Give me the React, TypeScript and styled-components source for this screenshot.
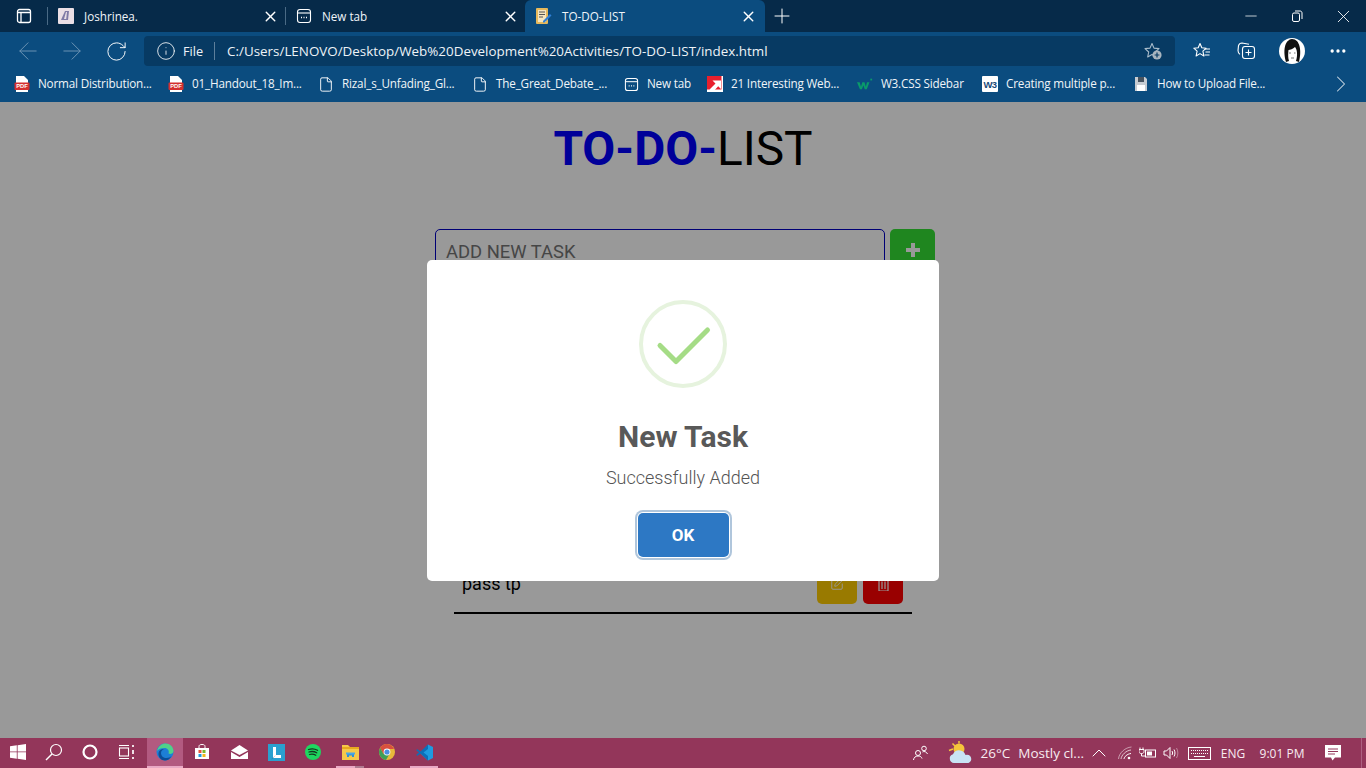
import React from "react";
import styled, { createGlobalStyle } from "styled-components";
import { ArrowLeft, ArrowRight, RotateCw, Info, Plus, X, Minus, ChevronRight, ChevronUp, MoreHorizontal, File as FileIcon, SquarePen } from "lucide-react";

const Global = createGlobalStyle`
  html, body { margin: 0; padding: 0; width: 1366px; height: 768px; overflow: hidden; background: #fff; }
  * { box-sizing: border-box; }
  body { font-family: "Open Sans", "Noto Sans", sans-serif; }
`;

const Screen = styled.div`display:flex;flex-direction:column;width:1366px;height:768px;`;

const TabStrip = styled.div`display:flex;align-items:center;height:32px;background:#062a49;color:#fff;`;
const SideButton = styled.div`width:47px;height:32px;display:flex;align-items:center;justify-content:center;`;
const Divider = styled.div`width:1px;height:18px;background:#4a6a85;flex:none;`;
const Tab = styled.div<{ $active?: boolean; $w: number }>`
  width:${p => p.$w}px;height:32px;display:flex;align-items:center;padding:0 ${p => p.$active ? 8 : 6}px 0 10px;flex:none;
  background:${p => p.$active ? "#0b4c7f" : "transparent"};
  border-radius:${p => p.$active ? "6px 6px 0 0" : "0"};
`;
const TabTitle = styled.span`flex:1;margin-left:10px;font-size:11.7px;color:#f0f5f9;white-space:nowrap;`;
const NewTab = styled.div`width:34px;height:32px;display:flex;align-items:center;justify-content:center;`;
const Spacer = styled.div`flex:1;`;
const WinBtn = styled.div`width:46px;height:32px;display:flex;align-items:center;justify-content:center;`;

const Toolbar = styled.div`display:flex;align-items:flex-start;height:37px;padding:4px 6px 0 6px;background:#0b4c7f;color:#fff;`;
const NavBtn = styled.div<{ $w?: number }>`width:${p => p.$w ?? 44}px;height:30px;display:flex;align-items:center;justify-content:center;flex:none;`;
const AddressBar = styled.div`width:1031px;height:30px;margin:0 5px 0 6px;padding:0 12px 0 12px;display:flex;align-items:center;background:#073a63;border-radius:4px;flex:none;`;
const AddrLabel = styled.span`margin-left:7px;font-size:12.7px;color:#eef3f7;`;
const AddrSep = styled.span`width:1px;height:18px;background:#5d7f9b;margin:0 12px 0 11px;`;
const AddrUrl = styled.span`flex:1;font-size:13.4px;color:#eef3f7;white-space:nowrap;`;

const BookmarkBar = styled.div`display:flex;align-items:center;height:33px;padding:0 0 3px 14px;background:#0b4c7f;`;
const Bookmark = styled.div<{ $w: number }>`width:${p => p.$w}px;flex:none;display:flex;align-items:center;`;
const BookmarkIcon = styled.div`width:16px;height:16px;margin-right:8px;flex:none;display:flex;align-items:center;justify-content:center;`;
const BookmarkText = styled.span`margin-top:-2px;font-size:11.7px;letter-spacing:-0.18px;color:#f0f5f9;white-space:nowrap;`;
const BookmarkMore = styled.div`margin-left:auto;width:50px;display:flex;justify-content:center;`;

const Main = styled.main`position:relative;flex:1;background:#fff;display:flex;flex-direction:column;align-items:center;overflow:hidden;font-family:Roboto,sans-serif;`;
const Title = styled.h1`margin:18px 0 0;height:58px;line-height:58px;font-size:47.8px;font-weight:400;color:#000;`;
const TitleAccent = styled.b`color:#00f;font-weight:700;`;
const Form = styled.div`display:flex;margin:51px 0 0 4px;width:500px;gap:5px;`;
const TaskInput = styled.div`width:450px;height:44px;border:1.5px solid #0000c4;border-radius:5px;padding:0 10px;display:flex;align-items:center;font-size:18.4px;color:#757575;`;
const AddBtn = styled.div`width:45px;height:44px;padding-bottom:2px;border-radius:5px;background:#35e035;color:#fff;display:flex;align-items:center;justify-content:center;`;
const TaskList = styled.div`margin-top:291px;width:458px;`;
const TaskRow = styled.div`display:flex;align-items:center;height:50px;padding:0 9px 8px 8px;border-bottom:2px solid #000;`;
const TaskName = styled.span`flex:1;padding-bottom:2px;font-size:18px;color:#000;`;
const SquareBtn = styled.div<{ $bg: string }>`width:40px;height:40px;margin-left:6px;border-radius:5px;background:${p => p.$bg};display:flex;align-items:center;justify-content:center;color:#fff;`;

const Overlay = styled.div`position:absolute;inset:0;background:rgba(0,0,0,.4);display:flex;align-items:center;justify-content:center;`;
const Dialog = styled.div`width:512px;height:321px;background:#fff;border-radius:5px;display:flex;flex-direction:column;align-items:center;padding-top:40px;`;
const SuccessIcon = styled.div`width:88px;height:88px;flex:none;`;
const DialogTitle = styled.h2`margin:29px 0 0;font-size:30px;line-height:40px;font-weight:700;color:#595959;`;
const DialogText = styled.p`margin:10px 0 0;font-size:18px;line-height:22px;font-weight:300;color:#545454;`;
const OkButton = styled.button`margin-top:24px;width:91px;height:44px;padding:0;border:0;border-radius:5px;background:#2d78c4;color:#fff;font:700 17px Roboto,sans-serif;box-shadow:0 0 0 1px #fff,0 0 0 3px #b0c6dc;`;

const Taskbar = styled.footer`display:flex;align-items:center;height:30px;background:#93365a;color:#fff;`;
const TaskSlot = styled.div<{ $w?: number; $active?: boolean; $ml?: number; $under?: string }>`
  position:relative;width:${p => p.$w ?? 36}px;margin-left:${p => p.$ml ?? 0}px;height:30px;flex:none;display:flex;align-items:center;justify-content:center;
  background:${p => p.$active ? "#b25a80" : "transparent"};
  border-bottom:2px solid ${p => p.$active ? "#e9a9c4" : "transparent"};
  &::after {
    content:"";position:absolute;left:4px;right:5px;bottom:-2px;height:2px;
    background:${p => p.$under ?? "transparent"};
  }
`;
const TrayText = styled.span<{ $size?: number; $w?: number; $ml?: number }>`font-size:${p => p.$size ?? 12.5}px;margin-left:${p => p.$ml ?? 0}px;${p => p.$w ? `width:${p.$w}px;text-align:center;` : ""}white-space:nowrap;color:#f7ecf1;flex:none;`;
const TrayIcon = styled.div<{ $w: number }>`width:${p => p.$w}px;height:30px;flex:none;display:flex;align-items:center;justify-content:center;`;
const ShowDesktop = styled.div`width:14px;height:30px;flex:none;margin-left:0;display:flex;justify-content:flex-end;padding-right:4px;&::after{content:"";width:1px;height:30px;background:#ad6080;}`;

const PdfIcon = () => (
  <svg width="16" height="16" viewBox="0 0 16 16">
    <path d="M2 0h8l4 4v12H2z" fill="#fff" />
    <rect x="0.5" y="6.500" width="15" height="7.500" rx="1" fill="#d32f2f" />
    <text x="8" y="12.400" textAnchor="middle" fontSize="5.800" fontWeight="700" fontFamily="Liberation Sans, sans-serif" fill="#fff">PDF</text>
  </svg>
);
const NewTabIcon = ({ size = 16 }: { size?: number }) => (
  <svg width={size} height={size} viewBox="0 0 16 16" fill="none" stroke="#fff" strokeWidth="1.1">
    <rect x="1.5" y="1.5" width="13" height="13" rx="2.5" /><path d="M1.5 5h13" />
    <path d="M5 9.5h1M7.5 9.5h1M10 9.5h1" strokeWidth="1.4" />
  </svg>
);
const PageIcon = () => <FileIcon size={17} strokeWidth={1.4} color="#fff" />;
const RedArrow = () => (
  <svg width="16" height="16" viewBox="0 0 16 16"><rect width="16" height="16" fill="#fff" /><rect width="14.500" height="13.500" fill="#e8202e" /><path d="M2.500 13.500 8.500 7.500 5.500 4.500h8.500v8.500l-2.800-2.800-4.800 5.300z" fill="#fff" /></svg>
);
const W3Icon = () => (
  <svg width="18" height="16" viewBox="0 0 18 16"><path d="M0 6h3l1.5 5L6 6h2.4l1.6 5 1.2-5H14l-3 8H8.7L7.2 9.5 5.5 14H3.3z" fill="#0a9a6a" /><path d="M15 2h2v2h-2z" fill="#0a9a6a" /></svg>
);
const W3BoxIcon = () => (
  <svg width="16" height="16" viewBox="0 0 16 16"><rect width="16" height="16" rx="1" fill="#fff" />
    <text x="8" y="12" textAnchor="middle" fontSize="9.500" fontWeight="700" fontFamily="Liberation Sans, sans-serif" letterSpacing="-0.6" fill="#1a4b7a">W3</text>
  </svg>
);
const FloppyIcon = () => (
  <svg width="14" height="16" viewBox="0 0 14 16"><path d="M1 1h10l2 2v12H1z" fill="#c7ccd2" /><rect x="4" y="1" width="6" height="5" fill="#47535f" /><rect x="3" y="9" width="8" height="6" fill="#fff" /></svg>
);
const StarPlus = () => (
  <svg width="20" height="20" viewBox="0 0 20 20" fill="none">
    <path d="M9 2.5l2 4.6 5 .5-3.7 3.3 1 4.9L9 13.5l-4.3 2.4 1-4.9L2 7.6l5-.5z" stroke="#a9bccb" strokeWidth="1.1" strokeLinejoin="round" />
    <circle cx="14" cy="14" r="4.6" fill="#a9b5bf" />
    <path d="M14 11.6v4.8M11.6 14h4.8" stroke="#073a63" strokeWidth="1.2" />
  </svg>
);
const Favorites = () => (
  <svg width="20" height="20" viewBox="0 0 20 20" fill="none" stroke="#fff" strokeWidth="1.1" strokeLinejoin="round">
    <path d="M8 2.500l1.800 4.300 4.400.4-3.300 3 1 4.800L8 12.600 4.100 15l1-4.800-3.300-3 4.400-.4z" />
    <path d="M13 8h5M13.500 11h4.500M12.500 14h5" />
  </svg>
);
const Collections = () => (
  <svg width="22" height="20" viewBox="0 0 22 20" fill="none" stroke="#fff" strokeWidth="1.1">
    <rect x="6.500" y="5.500" width="12" height="12" rx="2.500" />
    <path d="M12.500 8.500v6M9.500 11.500h6" />
    <path d="M13 3.200l-7-1.200c-2 0-3 1-3.500 2.600l-.5 5c0 2 .8 3 2 3.800" />
  </svg>
);
const Avatar = () => (
  <svg width="26" height="26" viewBox="0 0 26 26">
    <circle cx="13" cy="13" r="13" fill="#fff" />
    <path d="M7 24C4 14 5 2 13 1c8 0 10 12 7 23l-3-1c2-6 1-12-1-14-2 2-5 3-6.500 3-.5 4-.5 8 .5 11z" fill="#111" />
    <path d="M10 15h2M15 15h1.500M12 20h3" stroke="#555" strokeWidth=".8" />
  </svg>
);
const Sidebar = () => (
  <svg width="16" height="16" viewBox="0 0 16 16" fill="none" stroke="#fff" strokeWidth="1.3">
    <rect x="1.500" y="1.500" width="13" height="13" rx="2" /><path d="M1.500 4.500h13M5 4.500v10" />
  </svg>
);
const RestoreIcon = () => (
  <svg width="12" height="12" viewBox="0 0 12 12" fill="none" stroke="#fff" strokeWidth="1">
    <rect x="1.500" y="3" width="7" height="8.500" rx="1.500" /><path d="M4 1h5c1.200 0 2 .8 2 2v6" />
  </svg>
);
const Favicon1 = () => (
  <svg width="16" height="16" viewBox="0 0 16 16"><rect width="16" height="16" rx="1" fill="#eadfe6" /><path d="M7 3h4l-1 9H3z" fill="#7f7aa6" /><path d="M8 4l1 0-.8 7H6z" fill="#eadfe6" /></svg>
);
const TodoFavicon = () => (
  <svg width="17" height="18" viewBox="0 0 17 18">
    <rect x="1" y="1" width="12" height="16" rx="1" fill="#e6b95c" /><rect x="3" y="3" width="8" height="12" fill="#f5e6bf" />
    <path d="M4 5h6M4 7.500h6M4 10h4" stroke="#555" strokeWidth="1" />
    <path d="M8 14l7-7 1.500 1.500-7 7H8z" fill="#2f7fd6" />
  </svg>
);
const WinLogo = () => (
  <svg width="16" height="16" viewBox="0 0 16 16" fill="#fff"><path d="M0 2.300 6.800 1.300v6.200H0zM7.600 1.200 16 0v7.500H7.600zM0 8.300h6.800v6.400L0 13.700zM7.600 8.300H16V16l-8.400-1.200z" /></svg>
);
const SearchIc = () => (
  <svg width="18" height="18" viewBox="0 0 18 18" fill="none" stroke="#fff" strokeWidth="1.200"><circle cx="11" cy="7" r="5.500" /><path d="M7 11l-6 6" strokeWidth="1.500" /></svg>
);
const Cortana = () => <svg width="16" height="16" viewBox="0 0 16 16"><circle cx="8" cy="8" r="6.500" fill="none" stroke="#fff" strokeWidth="2.200" /></svg>;
const TaskView = () => (
  <svg width="17" height="16" viewBox="0 0 17 16" fill="none" stroke="#fff" strokeWidth="1.100"><path d="M1 1.500h10M1 14.500h10" /><rect x="1.500" y="4" width="9" height="8" /><path d="M15 1v2M15 6v4M15 13v2" strokeWidth="1.700" /></svg>
);
const Edge = () => (
  <svg width="18" height="18" viewBox="0 0 18 18">
    <circle cx="9" cy="9" r="8.500" fill="#1d7fd6" /><path d="M1 8C2 3 6 .5 9.500.5 14 .5 17.500 4 17.500 8c0 2.500-3 3.500-5 2.500 1.200-3-1-5.500-4-5.500C5 5 2.500 6 1 8z" fill="#4fd18a" />
    <path d="M5 10c0 3 2.500 5 5.500 5 2 0 4-1 5-2-1.500 3-4 4.500-6.500 4.500C5 17.500 2 14 2.500 10c.6-3 3.500-4.500 6-4-2 .5-3.500 2-3.500 4z" fill="#0c4d96" />
  </svg>
);
const Store = () => (
  <svg width="16" height="16" viewBox="0 0 16 16"><path d="M5 4V2.500C5 1 6 .5 8 .5s3 .5 3 2V4" fill="none" stroke="#fff" strokeWidth="1" /><path d="M1 4h14v11H1z" fill="#fff" /><rect x="4.500" y="6" width="3" height="3" fill="#e8553a" /><rect x="8.500" y="6" width="3" height="3" fill="#7cb82f" /><rect x="4.500" y="10" width="3" height="3" fill="#1e9be0" /><rect x="8.500" y="10" width="3" height="3" fill="#f6b81a" /></svg>
);
const Mail = () => (
  <svg width="17" height="14" viewBox="0 0 17 14" fill="#fff"><path d="M0 5.500 8.500 0 17 5.500 8.500 10z" /><path d="M0 7l8.500 5L17 7v7H0z" /></svg>
);
const LApp = () => (
  <svg width="17" height="17" viewBox="0 0 17 17"><rect width="17" height="17" fill="#2aa0cf" /><path d="M5 3h3v8h5v3H5z" fill="#fff" /><path d="M5 14l-2 1.500L8 11z" fill="#0c2b55" /></svg>
);
const Spotify = () => (
  <svg width="16" height="16" viewBox="0 0 16 16"><circle cx="8" cy="8" r="8" fill="#1ed760" /><path d="M3.500 5.500c3-1 6.500-.7 9 .8M4 8c2.500-.8 5.500-.5 7.700.8M4.500 10.500c2-.6 4.500-.4 6.300.7" fill="none" stroke="#13391f" strokeWidth="1.300" strokeLinecap="round" /></svg>
);
const Folder = () => (
  <svg width="17" height="16" viewBox="0 0 17 16"><path d="M0 1h6l2 2h9v13H0z" fill="#f6c84a" /><path d="M0 3h17v2H0z" fill="#e8a91f" /><path d="M5 13V10h7v3h-2v-1.500H7V13z" fill="#2f8fd6" /><rect x="4" y="8.500" width="9" height="2" fill="#4aa7e6" /></svg>
);
const Chrome = () => (
  <svg width="16" height="16" viewBox="0 0 16 16"><circle cx="8" cy="8" r="8" fill="#e8b83a" /><path d="M8 0a8 8 0 0 0-6.900 4l3.400 6L8 5h7A8 8 0 0 0 8 0z" fill="#d9503f" /><path d="M1.100 4A8 8 0 0 0 7 15.900L10.500 10 4.500 10z" fill="#3f9e58" /><circle cx="8" cy="8" r="3.400" fill="#fff" /><circle cx="8" cy="8" r="2.600" fill="#4a8fe0" /></svg>
);
const VSCode = () => (
  <svg width="17" height="17" viewBox="0 0 17 17"><path d="M12 0.500 17 3v11l-5 2.500L4.500 9.500z" fill="#1e9be0" /><path d="M12 .5 4.500 7.500 1.500 5.200 0 6l3 2.500L0 11l1.500.8 3-2.300L12 16.500V12L7.500 8.500 12 5z" fill="#0c6fb8" /></svg>
);
const People = () => (
  <svg width="17" height="16" viewBox="0 0 17 16" fill="none" stroke="#fff" strokeWidth="1"><circle cx="6" cy="8" r="2.500" /><path d="M1.500 15c.3-2.500 2-4 4.500-4s3.500 1 4 2.500" /><circle cx="12" cy="3.500" r="2.300" /><path d="M10.500 7c1.500-1 4-.5 5 2" /></svg>
);
const Weather = () => (
  <svg width="26" height="24" viewBox="0 0 26 24">
    <circle cx="11" cy="8" r="5.500" fill="#f5c43b" />
    <path d="M1 9.500 5 8M4.500 2.500 7 5M11 0v2.500" stroke="#f5c43b" strokeWidth="1.500" />
    <path d="M6 22a4.500 4.500 0 0 1-1-8.800C6.500 9.500 10.500 8.500 14 10c2 1 3 2.500 3.500 4a4 4 0 0 1 3 8z" fill="#c9e3f4" />
  </svg>
);
const WifiIc = () => (
  <svg width="16" height="16" viewBox="0 0 16 16" fill="none" stroke="#fff" strokeWidth="1"><path d="M1.500 14C2 8 8 2.500 14.500 2" opacity=".5" /><path d="M4 14c.5-4 5-8.500 10-9" opacity=".7" /><path d="M7 14c.3-2.200 3-5 7-5.500" /><circle cx="12" cy="13" r="1.300" fill="#fff" stroke="none" /></svg>
);
const Battery = () => (
  <svg width="18" height="14" viewBox="0 0 18 14" fill="none" stroke="#fff" strokeWidth="1"><rect x="6.500" y="4" width="10" height="7" /><rect x="8" y="5.500" width="5" height="4" fill="#fff" stroke="none" /><path d="M1 1.500v2M4 1.500v2M0 3.500h5v2c0 1.500-1 2-2.500 2S0 7 0 5.500zM2.500 7.500V10h4" /></svg>
);
const Volume = () => (
  <svg width="16" height="16" viewBox="0 0 16 16" fill="none" stroke="#fff" strokeWidth="1"><path d="M1 6h2.500L7 2.500v11L3.500 10H1z" /><path d="M9 6c.8 1.200.8 2.800 0 4M11 4.500c1.300 2 1.300 5 0 7" /><path d="M13.500 3c1.800 3 1.800 7 0 10" opacity=".4" /></svg>
);
const Keyboard = () => (
  <svg width="23" height="13" viewBox="0 0 23 13" fill="none" stroke="#fff" strokeWidth="1"><rect x=".5" y=".5" width="22" height="12" /><path d="M3 3.500h17M3 6.500h17" strokeDasharray="1 1" /><path d="M6 9.500h11" /></svg>
);
const Notification = () => (
  <svg width="16" height="16" viewBox="0 0 16 16"><path d="M0 0h16v12.500h-6L7.500 15.500 6 12.500H0z" fill="#fff" /><path d="M3 4h10M3 6.500h10M3 9h7" stroke="#93365a" strokeWidth="1" /></svg>
);
const PlusSolid = () => (
  <svg width="16" height="16" viewBox="0 0 16 16" fill="#fff"><path d="M6 1h4v5h5v4h-5v5H6v-5H1V6h5z" /></svg>
);
const TrashIc = () => (
  <svg width="11" height="14" viewBox="0 0 11 14" fill="none" stroke="#fff" strokeWidth="1.200"><path d="M0 2h11M3.500 2V.8h4V2" /><path d="M1 2.500h9V14H1z" /><path d="M4 4.500V12M7 4.500V12" /></svg>
);

const bookmarks = [
  { t: "Normal Distribution...", w: 154, i: <PdfIcon /> },
  { t: "01_Handout_18_Im...", w: 150, i: <PdfIcon /> },
  { t: "Rizal_s_Unfading_Gl...", w: 154, i: <PageIcon /> },
  { t: "The_Great_Debate_...", w: 151, i: <PageIcon /> },
  { t: "New tab", w: 84, i: <NewTabIcon size={15} /> },
  { t: "21 Interesting Web...", w: 150, i: <RedArrow /> },
  { t: "W3.CSS Sidebar", w: 125, i: <W3Icon /> },
  { t: "Creating multiple p...", w: 151, i: <W3BoxIcon /> },
  { t: "How to Upload File...", w: 134, i: <FloppyIcon /> },
];

export default function App() {
  return (
    <Screen>
      <Global />
      <TabStrip>
        <SideButton><Sidebar /></SideButton>
        <Divider />
        <Tab $w={237}>
          <Favicon1 />
          <TabTitle>Joshrinea.</TabTitle>
          <X size={17} color="#fff" />
        </Tab>
        <Divider />
        <Tab $w={239}>
          <NewTabIcon />
          <TabTitle>New tab</TabTitle>
          <X size={17} color="#fff" />
        </Tab>
        <Tab $active $w={240}>
          <TodoFavicon />
          <TabTitle>TO-DO-LIST</TabTitle>
          <X size={17} color="#fff" />
        </Tab>
        <NewTab><Plus size={24} strokeWidth={1} color="#fff" /></NewTab>
        <Spacer />
        <WinBtn><Minus size={18} strokeWidth={1} color="#fff" /></WinBtn>
        <WinBtn><RestoreIcon /></WinBtn>
        <WinBtn><X size={21} strokeWidth={1} color="#fff" /></WinBtn>
      </TabStrip>

      <Toolbar>
        <NavBtn><ArrowLeft size={28} strokeWidth={0.85} color="#6b93b3" /></NavBtn>
        <NavBtn><ArrowRight size={28} strokeWidth={0.85} color="#6b93b3" /></NavBtn>
        <NavBtn><RotateCw size={23} strokeWidth={1} color="#fff" /></NavBtn>
        <AddressBar>
          <Info size={20} strokeWidth={1} color="#fff" />
          <AddrLabel>File</AddrLabel>
          <AddrSep />
          <AddrUrl>C:/Users/LENOVO/Desktop/Web%20Development%20Activities/TO-DO-LIST/index.html</AddrUrl>
          <StarPlus />
        </AddressBar>
        <NavBtn><Favorites /></NavBtn>
        <NavBtn $w={45}><Collections /></NavBtn>
        <NavBtn $w={46}><Avatar /></NavBtn>
        <NavBtn $w={46}><MoreHorizontal size={20} color="#fff" /></NavBtn>
      </Toolbar>

      <BookmarkBar>
        {bookmarks.map(b => (
          <Bookmark key={b.t} $w={b.w}>
            <BookmarkIcon>{b.i}</BookmarkIcon>
            <BookmarkText>{b.t}</BookmarkText>
          </Bookmark>
        ))}
        <BookmarkMore><ChevronRight size={28} strokeWidth={0.9} color="#cfdbe5" /></BookmarkMore>
      </BookmarkBar>

      <Main>
        <Title><TitleAccent>TO-DO-</TitleAccent>LIST</Title>
        <Form>
          <TaskInput>ADD NEW TASK</TaskInput>
          <AddBtn><PlusSolid /></AddBtn>
        </Form>
        <TaskList>
          <TaskRow>
            <TaskName>pass tp</TaskName>
            <SquareBtn $bg="#ffcc00"><SquarePen size={14} strokeWidth={1.6} /></SquareBtn>
            <SquareBtn $bg="#ff0000"><TrashIc /></SquareBtn>
          </TaskRow>
        </TaskList>
        <Overlay>
          <Dialog>
            <SuccessIcon>
              <svg width="88" height="88" viewBox="0 0 88 88" fill="none">
                <circle cx="44" cy="44" r="42" stroke="#e6f3de" strokeWidth="4" />
                <path d="M21 45.500L37 61.500 68.500 30" stroke="#a5dc86" strokeWidth="5" strokeLinecap="round" strokeLinejoin="round" />
              </svg>
            </SuccessIcon>
            <DialogTitle>New Task</DialogTitle>
            <DialogText>Successfully Added</DialogText>
            <OkButton>OK</OkButton>
          </Dialog>
        </Overlay>
      </Main>

      <Taskbar>
        <TaskSlot><WinLogo /></TaskSlot>
        <TaskSlot><SearchIc /></TaskSlot>
        <TaskSlot><Cortana /></TaskSlot>
        <TaskSlot><TaskView /></TaskSlot>
        <TaskSlot $active $ml={3}><Edge /></TaskSlot>
        <TaskSlot $w={37.5}><Store /></TaskSlot>
        <TaskSlot $w={37}><Mail /></TaskSlot>
        <TaskSlot $w={37}><LApp /></TaskSlot>
        <TaskSlot $w={37}><Spotify /></TaskSlot>
        <TaskSlot $w={37} $under="linear-gradient(90deg,#e9a9c4 68%,#b07a90 68%)"><Folder /></TaskSlot>
        <TaskSlot $w={37}><Chrome /></TaskSlot>
        <TaskSlot $w={37} $under="#e9a9c4"><VSCode /></TaskSlot>
        <Spacer />
        <TrayIcon $w={40}><People /></TrayIcon>
        <TrayIcon $w={40}><Weather /></TrayIcon>
        <TrayText $size={13.5}>26°C</TrayText>
        <TrayText $size={13.5} $ml={8}>Mostly cl...</TrayText>
        <TrayIcon $w={30}><ChevronUp size={24} strokeWidth={1} color="#fff" /></TrayIcon>
        <TrayIcon $w={22}><WifiIc /></TrayIcon>
        <TrayIcon $w={24}><Battery /></TrayIcon>
        <TrayIcon $w={22}><Volume /></TrayIcon>
        <TrayIcon $w={34}><Keyboard /></TrayIcon>
        <TrayText $size={12} $w={34}>ENG</TrayText>
        <TrayText $size={12} $w={64}>9:01 PM</TrayText>
        <TrayIcon $w={38}><Notification /></TrayIcon>
        <ShowDesktop />
      </Taskbar>
    </Screen>
  );
}
